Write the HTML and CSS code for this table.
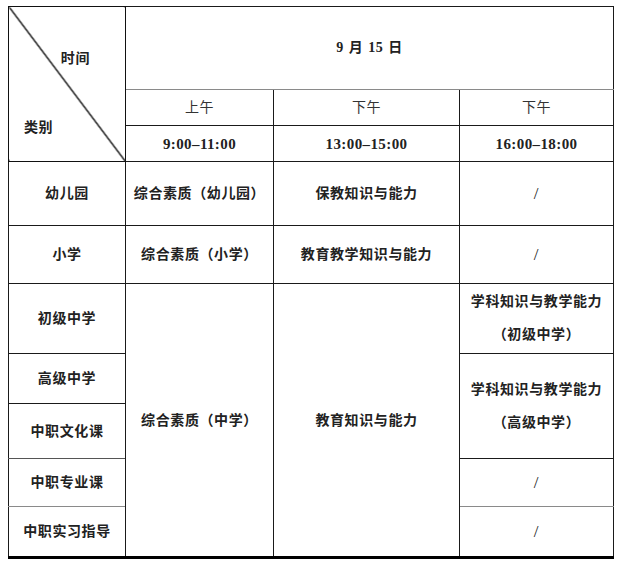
FILE: index.html
```html
<!DOCTYPE html>
<html lang="zh-CN">
<head>
<meta charset="utf-8">
<title>考试时间安排</title>
<link rel="stylesheet" href="styles.css">
</head>
<body>
<table class="schedule">
  <colgroup>
    <col class="c1"><col class="c2"><col class="c3"><col class="c4">
  </colgroup>
  <tr class="r-date">
    <td class="corner" rowspan="3">
      <div class="corner-in">
        <span class="lbl-time">时间</span>
        <span class="lbl-type">类别</span>
      </div>
    </td>
    <td class="date gray-b" colspan="3">9 月 15 日</td>
  </tr>
  <tr class="r-half">
    <td class="half">上午</td>
    <td class="half">下午</td>
    <td class="half">下午</td>
  </tr>
  <tr class="r-time">
    <td class="num">9:00–11:00</td>
    <td class="num">13:00–15:00</td>
    <td class="num">16:00–18:00</td>
  </tr>
  <tr class="r4">
    <td>幼儿园</td>
    <td>综合素质（幼儿园）</td>
    <td>保教知识与能力</td>
    <td class="slash">/</td>
  </tr>
  <tr class="r5">
    <td>小学</td>
    <td>综合素质（小学）</td>
    <td>教育教学知识与能力</td>
    <td class="slash">/</td>
  </tr>
  <tr class="r6">
    <td>初级中学</td>
    <td rowspan="5">综合素质（中学）</td>
    <td rowspan="5">教育知识与能力</td>
    <td class="two">学科知识与教学能力<br>（初级中学）</td>
  </tr>
  <tr class="r7">
    <td>高级中学</td>
    <td class="two" rowspan="2">学科知识与教学能力<br>（高级中学）</td>
  </tr>
  <tr class="r8">
    <td class="dgray-b">中职文化课</td>
  </tr>
  <tr class="r9">
    <td class="gray-b">中职专业课</td>
    <td class="slash gray-b">/</td>
  </tr>
  <tr class="r10">
    <td>中职实习指导</td>
    <td class="slash">/</td>
  </tr>
</table>
</body>
</html>
```

FILE: styles.css
```css
html, body {
  margin: 0;
  padding: 0;
  background: #ffffff;
}
body {
  padding: 6px 0 0 8px;
  font-family: "Liberation Serif", "Noto Sans CJK SC", serif;
  color: #111;
}
.schedule {
  border-collapse: collapse;
  table-layout: fixed;
  width: 605px;
  border-top: 1px solid #111;
  border-left: 1px solid #111;
  border-right: 1px solid #111;
  border-bottom: 3px solid #000;
}
.c1 { width: 117px; }
.c2 { width: 148px; }
.c3 { width: 186px; }
.c4 { width: 154px; }
.schedule td {
  border: 1px solid #1a1a1a;
  padding: 0 0 3px 0;
  text-align: center;
  vertical-align: middle;
  font-size: 14px;
  line-height: 20px;
  font-weight: 700;
  letter-spacing: 0.6px;
  color: #222;
  font-family: "Noto Sans CJK SC", "Liberation Serif", sans-serif;
}
.schedule td.gray-b { border-bottom-color: #8a8a8a; }
.schedule td.dgray-b { border-bottom-color: #555; }
.r-date { height: 83px; }
.r-half { height: 36px; }
.r-time { height: 36px; }
.r4 { height: 64px; }
.r5 { height: 58px; }
.r6 { height: 69px; }
.r7 { height: 50px; }
.r8 { height: 55px; }
.r9 { height: 48px; }
.r10 { height: 51px; }

.schedule td.corner {
  border-color: #111;
  padding: 0;
  background: linear-gradient(to top right,
    transparent calc(50% - 1px),
    #111 calc(50% - 0.4px),
    #111 calc(50% + 0.4px),
    transparent calc(50% + 1px));
  vertical-align: top;
}
.corner-in {
  display: flex;
  flex-direction: column;
  height: 154px;
  box-sizing: border-box;
  padding-top: 40px;
}
.lbl-time {
  align-self: flex-end;
  margin-right: 35px;
}
.lbl-type {
  align-self: flex-start;
  margin-left: 15px;
  margin-top: 49px;
}
.schedule td.date {
  font-family: "Liberation Serif", "Noto Sans CJK SC", serif;
  font-weight: 700;
  font-size: 14px;
  letter-spacing: 0.5px;
  word-spacing: 1px;
  padding: 0;
}
.schedule td.half {
  font-weight: 400;
  color: #333;
}
.schedule td.num {
  font-family: "Liberation Serif", serif;
  font-weight: 700;
  font-size: 15px;
  letter-spacing: 0.4px;
  padding: 0;
}
.schedule td.slash {
  font-family: "Liberation Serif", serif;
  font-size: 17px;
  font-weight: 400;
  color: #222;
  padding: 0;
}
.schedule td.two {
  line-height: 33px;
}
```
